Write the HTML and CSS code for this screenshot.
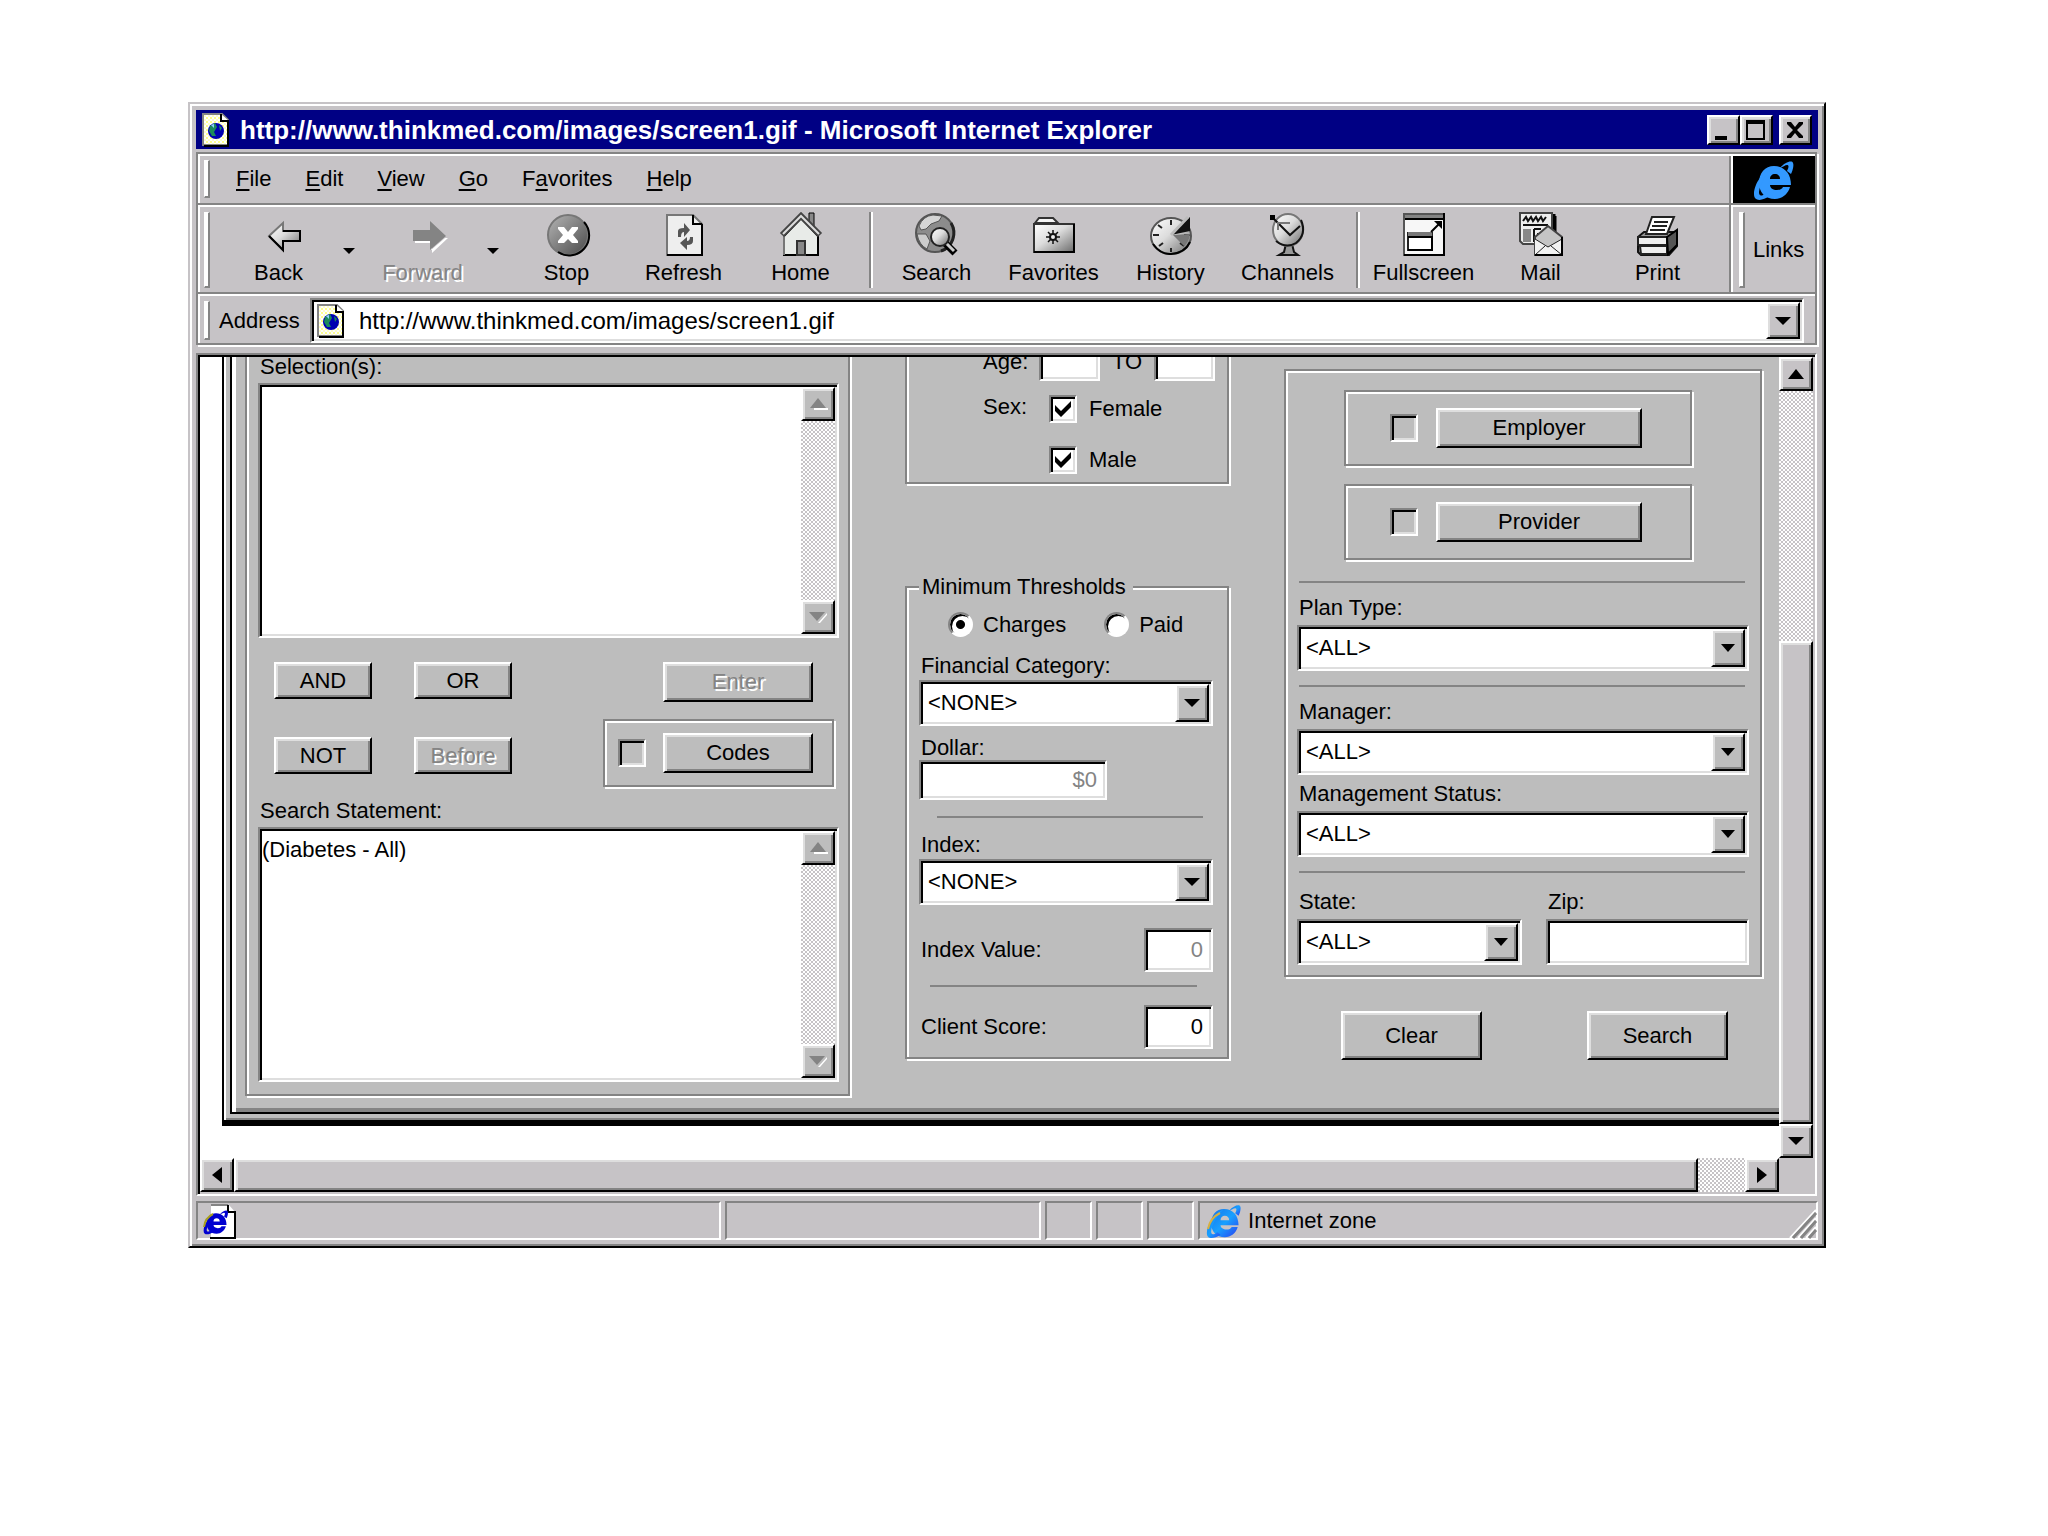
FILE: index.html
```html
<!DOCTYPE html>
<html lang="en">
<head>
<meta charset="utf-8">
<title>http://www.thinkmed.com/images/screen1.gif - Microsoft Internet Explorer</title>
<link rel="stylesheet" href="styles.css">
</head>
<body>
<svg class="defs" width="0" height="0" aria-hidden="true">
  <defs>
    <linearGradient id="steel" x1="0" y1="0" x2="1" y2="1"><stop offset="0" stop-color="#fff"/><stop offset=".45" stop-color="#dcdcdc"/><stop offset="1" stop-color="#6b6b6b"/></linearGradient>
    <linearGradient id="disc" x1="0" y1="0" x2="1" y2="1"><stop offset="0" stop-color="#b5b5b5"/><stop offset="1" stop-color="#4a4a4a"/></linearGradient>
    <linearGradient id="blue" x1="0" y1="0" x2="1" y2="1"><stop offset="0" stop-color="#1673e8"/><stop offset=".5" stop-color="#18a0ff"/><stop offset="1" stop-color="#2a3ff0"/></linearGradient>
    <pattern id="dots" width="4" height="4" patternUnits="userSpaceOnUse"><rect width="4" height="4" fill="#fff"/><rect width="2" height="2" fill="#ffff8c"/><rect x="2" y="2" width="2" height="2" fill="#ffffc8"/></pattern>
    <symbol id="page-globe" viewBox="0 0 28 34">
      <path d="M1 1H20L26 7V32H1Z" fill="url(#dots)" stroke="#848484" stroke-width="2"/>
      <path d="M26 7V33H2" fill="none" stroke="#000" stroke-width="2"/>
      <path d="M19 1V8H27" fill="#fff" stroke="#000" stroke-width="2"/>
      <circle cx="14" cy="18" r="8" fill="#0000b0"/>
      <path d="M8 13L13 10L15 14L12 19L14 23L10 23L7 18Z" fill="#1b8a5a"/>
      <path d="M17 12L20 15L18 18Z" fill="#1b8a5a"/>
      <path d="M9 12L12 11V15Z" fill="#8fd0ff"/>
    </symbol>
    <symbol id="e-logo" viewBox="0 0 40 42">
      <path fill-rule="evenodd" d="M20 7C30 7 37 14 37 26H16C16 29 19 31 23 31C26 31 28 30 29 28H36C34 35 28 40 21 40C11 40 5 33 5 24C5 14 11 7 20 7ZM16 20H26C26 17 24 15 21 15C18 15 16 17 16 20Z"/>
      <path d="M26 9C31 3 38 1 39 4C40 6 39 11 37 15L33 12C35 8 35 6 33 6C31 6 29 8 26 9Z"/>
      <path d="M19 8C9 12 0 25 0 35C0 43 8 42 16 37L12 34C7 38 5 37 5 33C6 25 11 16 19 8Z"/>
    </symbol>
  </defs>
</svg>

<main class="window">
  <header class="title-bar">
    <svg class="page-icon"><use href="#page-globe"/></svg>
    <h1>http://www.thinkmed.com/images/screen1.gif - Microsoft Internet Explorer</h1>
    <div class="title-buttons">
      <button class="bevel" aria-label="Minimize"><svg width="24" height="22" viewBox="0 0 24 22"><path d="M4 17H16V21H4Z"/></svg></button>
      <button class="bevel" aria-label="Maximize"><svg width="24" height="22" viewBox="0 0 24 22"><path fill-rule="evenodd" d="M2 1H21V21H2ZM4 5V19H19V5Z"/></svg></button>
      <button class="bevel close" aria-label="Close"><svg width="24" height="22" viewBox="0 0 24 22"><path d="M4 3H8L12 8L16 3H20V5L14 11L20 17V19H16L12 14L8 19H4V17L10 11L4 5Z"/></svg></button>
    </div>
  </header>

  <div class="rebar etched">
    <div class="band-row menu-row">
      <nav class="band menu">
        <span class="grip"></span>
        <button><u>F</u>ile</button><button><u>E</u>dit</button><button><u>V</u>iew</button><button><u>G</u>o</button><button>F<u>a</u>vorites</button><button><u>H</u>elp</button>
      </nav>
      <div class="brand"><svg width="40" height="44"><use href="#e-logo" fill="#3399ff"/></svg></div>
    </div>
    <div class="band-row tool-row">
      <div class="band tools">
        <span class="grip"></span>
        <button class="tool"><svg viewBox="0 0 44 44"><path d="M12 24L26 11V19H43V29H26V38Z" fill="url(#steel)" stroke="#777" stroke-width="2"/><path d="M26 19H43V29H26V38L12 24" fill="none" stroke="#000" stroke-width="2"/></svg>Back</button>
        <button class="drop-arrow" aria-label="Back history"><svg width="12" height="6"><path d="M0 0H12L6 6Z"/></svg></button>
        <button class="tool" disabled><svg viewBox="0 0 44 44"><path d="M14 29H30V38L44 26H47L31 41V31H14Z" fill="#fff"/><path d="M12 18H29V9L45 24L29 38V29H12Z" fill="#848484"/></svg>Forward</button>
        <button class="drop-arrow" aria-label="Forward history"><svg width="12" height="6"><path d="M0 0H12L6 6Z"/></svg></button>
        <button class="tool"><svg viewBox="0 0 44 44"><circle cx="23" cy="23" r="20" fill="url(#disc)" stroke="#777" stroke-width="2"/><path d="M39 10A20 20 0 0 1 13 40" fill="none" stroke="#000" stroke-width="2"/><path d="M13 15H19L23 20L27 15H33V17L28 23L33 29V31H27L23 27L19 31H13V29L18 23L13 17Z" fill="#fff"/></svg>Stop</button>
        <button class="tool"><svg viewBox="0 0 44 44"><path d="M5 3H31L40 12V43H5Z" fill="#eee" stroke="#777" stroke-width="2"/><path d="M40 12V43H5M31 3V12H40" fill="none" stroke="#000" stroke-width="2"/><path d="M16 25V19Q16 16 22 16V11L28 18L22 25V20Q19 20 19 25Z M31 25V29Q31 33 25 33V38L18 31L25 25V29Q28 29 28 25Z" fill="#555"/></svg>Refresh</button>
        <button class="tool"><svg viewBox="0 0 44 44"><path d="M30 1H35V16L30 11Z" fill="#888" stroke="#000"/><path d="M5 24L22 6L39 24V43H5Z" fill="#e8ebe8" stroke="#000" stroke-width="2"/><path d="M5 43V24" stroke="#777" stroke-width="2"/><path d="M3 23L22 4L41 23" fill="none" stroke="#444" stroke-width="6"/><path d="M4 22L22 4L40 22" fill="none" stroke="#ddd" stroke-width="2"/><path d="M18 43V29H26V43Z" fill="#888" stroke="#333" stroke-width="2"/></svg>Home</button>
        <span class="sep"></span>
        <button class="tool"><svg viewBox="0 0 44 44"><circle cx="20" cy="21" r="19" fill="#8c8c8c" stroke="#555" stroke-width="2"/><path d="M4 14Q8 4 18 3L27 4L24 9L16 12L11 17L6 18Z" fill="#d5d5d5" stroke="#555"/><path d="M2 22L11 22L15 29L12 37Q4 33 2 22Z" fill="#ccc" stroke="#555"/><path d="M36 11A19 19 0 0 1 26 39" fill="none" stroke="#222" stroke-width="3"/><path d="M30 31L40 41" stroke="#000" stroke-width="7"/><path d="M31 31L39 39" stroke="#ccc" stroke-width="3"/><circle cx="25" cy="25" r="9" fill="url(#steel)" stroke="#222" stroke-width="2"/></svg>Search</button>
        <button class="tool"><svg viewBox="0 0 44 44"><path d="M3 11L7 6H21L26 11Z" fill="#f4f4f4" stroke="#333" stroke-width="2"/><path d="M2 12H42V40H2Z" fill="url(#steel)" stroke="#333" stroke-width="2"/><path d="M42 12V40H2" fill="none" stroke="#000" stroke-width="2"/><path d="M21 18V32M14 25H28M16 20L26 30M26 20L16 30" stroke="#111" stroke-width="1.500"/><circle cx="21" cy="25" r="3" fill="#eee" stroke="#111" stroke-width="2"/></svg>Favorites</button>
        <button class="tool"><svg viewBox="0 0 44 44"><ellipse cx="22" cy="24" rx="20" ry="18" fill="url(#steel)" stroke="#555" stroke-width="2"/><path d="M4 32Q12 43 22 42Q36 41 41 30" fill="none" stroke="#000" stroke-width="2"/><path d="M22 8V13M22 36V40M4 23H10M35 23H41M9 13L13 16M10 34L14 31M31 31L35 34" stroke="#222" stroke-width="2"/><path d="M24 23L41 22Q40 30 35 34Z" fill="#777"/><path d="M22 23L41 5V19Z" fill="#111"/><path d="M22 23L39 5" stroke="#bbb" stroke-width="3"/></svg>History</button>
        <button class="tool"><svg viewBox="0 0 44 44"><path d="M18 40L20 32H26L28 40L32 43H13Z" fill="#999" stroke="#111" stroke-width="2"/><ellipse cx="22" cy="18" rx="15" ry="16" fill="url(#steel)" stroke="#777" stroke-width="2"/><path d="M35 8Q41 22 30 31Q20 37 10 29" fill="none" stroke="#111" stroke-width="2"/><path d="M6 5L24 23L34 14" fill="none" stroke="#111" stroke-width="2"/><path d="M12 18V11H24" fill="none" stroke="#777" stroke-width="2"/><path d="M4 3H9V8H4Z"/></svg>Channels</button>
        <span class="sep"></span>
        <button class="tool"><svg viewBox="0 0 44 44"><path d="M2 2H42V43H2Z" fill="#f7f7f7" stroke="#555" stroke-width="2"/><path d="M3 3H41V6H3Z" fill="#848484"/><path d="M42 1V43H2M3 7H41" fill="none" stroke="#000" stroke-width="2"/><path d="M6 21H30V38H6Z" fill="#fff" stroke="#222" stroke-width="2"/><path d="M6 20H30V25H6Z" fill="#777"/><path d="M6 25H30V38H6M29 20L38 11" fill="none" stroke="#000" stroke-width="2"/><path d="M32 9H40V17Z"/></svg>Fullscreen</button>
        <button class="tool"><svg viewBox="0 0 44 44"><path d="M35 2V26M36 4V26" stroke="#000" stroke-width="3"/><path d="M1 1H33V32H4L1 29Z" fill="#eee" stroke="#444" stroke-width="2"/><path d="M4 9L7 5L9 9L12 5L14 9L17 5L19 9L22 5L24 9L27 5M4 13H29" fill="none" stroke="#111" stroke-width="2"/><path d="M4 17H12V30H4Z" fill="#888"/><path d="M15 17H22M15 17V30M18 22H23" stroke="#111" stroke-width="2"/><path d="M16 25L29 14L43 25V43H16Z" fill="#c5c5c5" stroke="#444" stroke-width="2"/><path d="M16 27L29 35L43 27V43H16Z" fill="#f2f2f2"/><path d="M16 27L29 35L43 27M16 43L26 34M43 43L32 34" fill="none" stroke="#222"/><path d="M43 25V43H16" fill="none" stroke="#000" stroke-width="2"/></svg>Mail</button>
        <button class="tool"><svg viewBox="0 0 44 44"><path d="M2 25L8 20H41V34L33 43H5L2 40Z" fill="#999" stroke="#111" stroke-width="2"/><path d="M2 25H31V33H2ZM4 34H31V42H5Z" fill="#eee" stroke="#222" stroke-width="2"/><path d="M31 25L41 18V33L32 42Z" fill="#555" stroke="#000" stroke-width="2"/><path d="M10 22L16 5H38L31 22Z" fill="#fff" stroke="#222" stroke-width="2"/><path d="M18 10H32M16 14H31M14 18H29" stroke="#222" stroke-width="2"/></svg>Print</button>
      </div>
      <div class="band links"><span class="grip"></span><button>Links</button></div>
    </div>
    <div class="address-row">
      <span class="grip"></span>
      <label for="address">Address</label>
      <div class="combo sunken address-box">
        <svg class="page-icon"><use href="#page-globe"/></svg>
        <input id="address" type="text" value="http://www.thinkmed.com/images/screen1.gif">
        <button class="bevel arrow-btn" aria-label="Show addresses"><svg width="16" height="8"><path d="M0 0H16L8 8Z"/></svg></button>
      </div>
    </div>
  </div>

  <div class="pane">
    <div class="viewport">
      <div class="frame">
        <form class="form" onsubmit="return false">
          <section class="group etched codes-group">
            <label for="selections">Selection(s):</label>
            <div class="list sunken">
              <textarea id="selections"></textarea>
              <div class="vbar">
                <span class="bevel arrow-btn"><svg width="16" height="12"><path d="M4 10H18V12H4Z" fill="#fff"/><path d="M8 0L16 10H0Z" fill="#848484"/></svg></span>
                <span class="bevel arrow-btn"><svg width="18" height="12"><path d="M18 2V4L11 12H9Z" fill="#fff"/><path d="M0 1H16L8 10Z" fill="#848484"/></svg></span>
              </div>
            </div>
            <div class="operators">
              <div class="op-grid">
                <button class="bevel">AND</button><button class="bevel">OR</button>
                <button class="bevel">NOT</button><button class="bevel" disabled>Before</button>
              </div>
              <div class="op-side">
                <button class="bevel push" disabled>Enter</button>
                <div class="etched code-box">
                  <input type="checkbox" class="flat" aria-label="Use codes">
                  <button class="bevel push">Codes</button>
                </div>
              </div>
            </div>
            <label for="statement">Search Statement:</label>
            <div class="list sunken">
              <textarea id="statement">(Diabetes - All)</textarea>
              <div class="vbar">
                <span class="bevel arrow-btn"><svg width="16" height="12"><path d="M4 10H18V12H4Z" fill="#fff"/><path d="M8 0L16 10H0Z" fill="#848484"/></svg></span>
                <span class="bevel arrow-btn"><svg width="18" height="12"><path d="M18 2V4L11 12H9Z" fill="#fff"/><path d="M0 1H16L8 10Z" fill="#848484"/></svg></span>
              </div>
            </div>
          </section>

          <div class="middle">
            <section class="group etched person">
              <div class="age-row">
                <label for="age-from">Age:</label><input id="age-from" class="sunken" type="text">
                <label for="age-to">TO</label><input id="age-to" class="sunken" type="text">
              </div>
              <div class="sex-row">
                <span>Sex:</span>
                <div class="checks">
                  <label><input type="checkbox" checked>Female</label>
                  <label><input type="checkbox" checked>Male</label>
                </div>
              </div>
            </section>
            <fieldset class="group etched thresholds">
              <legend>Minimum Thresholds</legend>
              <div class="radios">
                <label><input type="radio" name="basis" checked>Charges</label>
                <label><input type="radio" name="basis">Paid</label>
              </div>
              <label for="fin">Financial Category:</label>
              <div class="combo sunken"><select id="fin"><option>&lt;NONE&gt;</option></select><span class="bevel arrow-btn"><svg width="16" height="8"><path d="M0 0H16L8 8Z"/></svg></span></div>
              <label for="dollar" class="dollar-label">Dollar:</label>
              <input id="dollar" class="sunken number" type="text" value="$0" disabled>
              <hr>
              <label for="index">Index:</label>
              <div class="combo sunken"><select id="index"><option>&lt;NONE&gt;</option></select><span class="bevel arrow-btn"><svg width="16" height="8"><path d="M0 0H16L8 8Z"/></svg></span></div>
              <div class="value-row first"><label for="index-value">Index Value:</label><input id="index-value" class="sunken number" type="text" value="0" disabled></div>
              <hr>
              <div class="value-row"><label for="score">Client Score:</label><input id="score" class="sunken number" type="text" value="0"></div>
            </fieldset>
          </div>

          <div class="right">
            <section class="group etched plan">
              <div class="etched pick"><input type="checkbox" class="flat" aria-label="Use employer"><button class="bevel push">Employer</button></div>
              <div class="etched pick"><input type="checkbox" class="flat" aria-label="Use provider"><button class="bevel push">Provider</button></div>
              <hr>
              <label for="plan">Plan Type:</label>
              <div class="combo sunken"><select id="plan"><option>&lt;ALL&gt;</option></select><span class="bevel arrow-btn"><svg width="14" height="8"><path d="M0 0H14L7 8Z"/></svg></span></div>
              <hr>
              <label for="manager">Manager:</label>
              <div class="combo sunken"><select id="manager"><option>&lt;ALL&gt;</option></select><span class="bevel arrow-btn"><svg width="14" height="8"><path d="M0 0H14L7 8Z"/></svg></span></div>
              <label for="status" class="status-label">Management Status:</label>
              <div class="combo sunken"><select id="status"><option>&lt;ALL&gt;</option></select><span class="bevel arrow-btn"><svg width="14" height="8"><path d="M0 0H14L7 8Z"/></svg></span></div>
              <hr>
              <div class="place">
                <div>
                  <label for="state">State:</label>
                  <div class="combo sunken"><select id="state"><option>&lt;ALL&gt;</option></select><span class="bevel arrow-btn"><svg width="14" height="8"><path d="M0 0H14L7 8Z"/></svg></span></div>
                </div>
                <div>
                  <label for="zip">Zip:</label>
                  <input id="zip" class="sunken" type="text">
                </div>
              </div>
            </section>
            <div class="actions">
              <button class="bevel push" type="reset">Clear</button>
              <button class="bevel push">Search</button>
            </div>
          </div>
        </form>
      </div>
    </div>
    <div class="scroll-v">
      <span class="bevel arrow-btn"><svg width="16" height="10"><path d="M8 0L16 10H0Z"/></svg></span>
      <span class="track"></span>
      <span class="bevel thumb"></span>
      <span class="bevel arrow-btn"><svg width="16" height="8"><path d="M0 0H16L8 8Z"/></svg></span>
    </div>
    <div class="scroll-h">
      <span class="bevel arrow-btn"><svg width="10" height="16"><path d="M10 0V16L0 8Z"/></svg></span>
      <span class="bevel thumb"></span>
      <span class="track"></span>
      <span class="bevel arrow-btn"><svg width="10" height="16"><path d="M0 0V16L10 8Z"/></svg></span>
    </div>
  </div>

  <footer class="status-bar">
    <div class="cell main"><svg width="34" height="36" viewBox="0 0 34 36"><path d="M10 2H28L34 9V34H10Z" fill="#fff"/><path d="M10 2H27" stroke="#848484" stroke-width="2"/><path d="M27 2V9H34V35H9" fill="none" stroke="#000" stroke-width="2"/><use href="#e-logo" x="2" y="6" width="26" height="26" fill="#0000d0"/><path d="M3 24Q4 15 12 11" fill="none" stroke="#a8a020" stroke-width="2"/></svg></div>
    <div class="cell second"></div>
    <div class="cell small"></div>
    <div class="cell small"></div>
    <div class="cell small"></div>
    <div class="cell zone">
      <svg width="36" height="36"><use href="#e-logo" fill="url(#blue)"/><path d="M2 26Q4 15 14 10" fill="none" stroke="#d8b040" stroke-width="2"/></svg>
      <span>Internet zone</span>
      <svg class="size-grip" width="26" height="28" viewBox="0 0 26 28"><path d="M0 28L26 0M8 28L26 8M16 28L26 17" stroke="#fff" stroke-width="2"/><path d="M3 28L26 3M11 28L26 11M19 28L26 20" stroke="#848484" stroke-width="3"/></svg>
    </div>
  </footer>
</main>
</body>
</html>
```
FILE: styles.css
```css
:root {
  --chrome: #c6c3c6;
  --face: #bdbdbd;
  --dark: #848484;
  --lite: #dedede;
}

* { box-sizing: border-box; }

body {
  margin: 0;
  background: #fff;
  color: #000;
  font: 22px/24px "Liberation Sans", Arial, sans-serif;
}

button, input, select, textarea {
  margin: 0;
  padding: 0;
  border: 0;
  border-radius: 0;
  background: none;
  color: inherit;
  font: inherit;
  appearance: none;
  outline: none;
}

svg { display: block; flex: none; overflow: visible; }
.defs { position: absolute; }
u { text-underline-offset: 3px; text-decoration-thickness: 2px; }

/* Shared 3-D edges */
.etched {
  border: 2px solid var(--dark);
  box-shadow: 2px 2px 0 #fff, inset 2px 2px 0 #fff;
}

.bevel {
  border: 2px solid #000;
  border-top-color: #fff;
  border-left-color: #fff;
  background: var(--face);
  box-shadow: inset 2px 2px 0 var(--lite), inset -2px -2px 0 var(--dark);
}

.sunken {
  border: 2px solid #fff;
  border-top-color: var(--dark);
  border-left-color: var(--dark);
  background: #fff;
  box-shadow: inset 2px 2px 0 #000, inset -2px -2px 0 var(--lite);
}

.arrow-btn {
  display: flex;
  align-items: center;
  justify-content: center;
  flex: none;
}

.bevel:disabled, .tool:disabled {
  color: var(--dark);
  text-shadow: 2px 2px 0 #fff;
}

.window {
  margin: 102px 222px 0 188px;
  padding: 6px;
  border: 2px solid #000;
  border-top-color: var(--chrome);
  border-left-color: var(--chrome);
  background: var(--chrome);
  box-shadow: inset 2px 2px 0 #fff, inset -2px -2px 0 var(--dark);
}

.rebar .bevel, .title-bar .bevel, .scroll-v .bevel, .scroll-h .bevel { background: var(--chrome); }

/* Title bar */
.title-bar {
  display: flex;
  align-items: center;
  gap: 10px;
  height: 39px;
  padding: 0 6px;
  background: #000084;
  color: #fff;
}

.page-icon { width: 28px; height: 34px; }

.title-bar h1 {
  flex: 1;
  margin: 0;
  font-size: 26px;
  line-height: 28px;
  font-weight: bold;
  white-space: nowrap;
}

.title-buttons { display: flex; }
.title-buttons button { width: 33px; height: 30px; padding: 2px; }
.title-buttons .close { margin-left: 6px; }

/* Tool bands */
.rebar { margin: 3px 1px 0 0; }
.band-row { display: flex; border-bottom: 2px solid var(--dark); box-shadow: 0 2px 0 #fff; }
.menu-row { height: 51px; }
.tool-row { height: 89px; }
.band { display: flex; padding-left: 6px; }

.grip {
  flex: none;
  width: 6px;
  border: 1px solid #fff;
  border-right: 2px solid var(--dark);
  border-bottom: 2px solid var(--dark);
  background: #fff;
}

.menu { flex: 1; align-items: center; gap: 34px; }
.menu .grip { height: 38px; margin-right: -8px; }

.brand {
  display: flex;
  align-items: center;
  justify-content: center;
  width: 82px;
  margin-top: 2px;
  background: #000;
  box-shadow: -2px 0 0 #fff, -4px 0 0 var(--dark);
}

.tools { flex: 1; padding-top: 7px; }
.tools .grip { height: 76px; margin-right: 10px; }
.tool {
  display: flex;
  flex-direction: column;
  align-items: center;
  gap: 5px;
  width: 117px;
  height: 73px;
}
.tool svg { width: 44px; height: 44px; }
.drop-arrow { display: flex; justify-content: center; width: 27px; padding: 36px 4px 0 0; }

.sep {
  width: 4px;
  height: 76px;
  margin: 0 5px 0 10px;
  border-left: 2px solid var(--dark);
  border-right: 2px solid #fff;
}

.links { width: 82px; padding-top: 7px; gap: 8px; box-shadow: -2px 0 0 #fff, -4px 0 0 var(--dark); }
.links .grip { height: 76px; }
.links button { height: 76px; }

.address-row { display: flex; align-items: center; height: 49px; padding: 4px 11px 0 6px; }
.address-row .grip { height: 39px; margin-right: 9px; }
.address-row label { width: 91px; }
.combo.address-box { flex: 1; height: 45px; padding-left: 5px; }
.address-box input { flex: 1; padding-left: 14px; font-size: 24px; }

/* Drop-down boxes */
.combo { display: flex; align-items: center; height: 46px; padding: 2px; }
.combo select { flex: 1; align-self: stretch; min-width: 0; padding-left: 5px; }
.combo .arrow-btn { width: 34px; height: 100%; }

/* Document pane */
.pane {
  display: grid;
  grid-template-columns: minmax(0, 1fr) 34px;
  grid-template-rows: auto 34px;
  margin: 8px 1px 0 0;
  padding: 2px;
  border: 2px solid #fff;
  border-top-color: var(--dark);
  border-left-color: var(--dark);
  box-shadow: inset 2px 2px 0 #000;
}

.viewport { overflow: hidden; padding: 0 0 32px 22px; background: #fff; }

.frame {
  margin-top: -12px;
  padding: 0 0 6px 6px;
  border-left: 2px solid #000;
  border-bottom: 6px solid #000;
  background: var(--face);
  box-shadow: inset 2px 0 0 #fff, inset 0 -2px 0 var(--dark);
}

.form {
  display: grid;
  grid-template-columns: 607fr 326fr 480fr;
  column-gap: 53px;
  align-items: start;
  padding: 0 15px 16px 13px;
  border-left: 2px solid #000;
  border-bottom: 2px solid #000;
  box-shadow: inset 4px 0 0 #fff, inset 0 -4px 0 var(--dark);
}

.group { margin: 0 2px 0 0; }
.group > label { display: block; padding-left: 2px; }

.codes-group { padding: 8px 9px 12px 11px; }

.list { display: flex; height: 255px; margin-top: 4px; padding: 2px; }
.list textarea { flex: 1; padding: 7px 0; resize: none; }
.vbar {
  display: flex;
  flex-direction: column;
  justify-content: space-between;
  width: 34px;
}
.vbar .arrow-btn { height: 34px; }

.track, .vbar { background: repeating-conic-gradient(#fff 0 25%, #c6c3c6 0 50%) 0 0 / 4px 4px; }

.operators { display: flex; justify-content: space-between; padding: 24px 5px 12px 16px; }
.op-grid { display: grid; grid-template-columns: 98px 98px; grid-auto-rows: 37px; gap: 38px 42px; }
.op-side { display: flex; flex-direction: column; align-items: flex-start; width: 231px; gap: 17px; }
.op-side .push { width: 150px; height: 40px; }
.op-side > .push { margin-left: 60px; }
.code-box { display: flex; align-items: center; gap: 17px; width: 100%; height: 68px; padding-left: 13px; }

/* Tick boxes and radios */
input[type="checkbox"] {
  flex: none;
  width: 28px;
  height: 28px;
  border: 2px solid #fff;
  border-top-color: var(--dark);
  border-left-color: var(--dark);
  background: #fff;
  box-shadow: inset 2px 2px 0 #000, inset -2px -2px 0 var(--lite);
}
input[type="checkbox"].flat { background: var(--face); }
input[type="checkbox"]:checked {
  background: #fff url("data:image/svg+xml,%3Csvg xmlns='http://www.w3.org/2000/svg' width='24' height='24'%3E%3Cpath d='M4 8L10 14L20 4V10L10 20L4 14Z'/%3E%3C/svg%3E") center no-repeat;
}
input[type="radio"] {
  width: 25px;
  height: 25px;
  border: 2px solid #fff;
  border-top-color: var(--dark);
  border-left-color: var(--dark);
  border-radius: 50%;
  background: #fff;
  box-shadow: inset 2px 2px 0 #000;
}
input[type="radio"]:checked { background: radial-gradient(circle, #000 4px, #fff 5px); }

/* Person filters */
.person { padding: 0 0 8px 76px; }
.age-row { display: flex; align-items: center; }
.age-row label { width: 56px; padding-bottom: 4px; }
.age-row input { width: 61px; height: 34px; }
.age-row input + label { width: 42px; margin-left: 12px; }
.sex-row { display: flex; margin-top: 14px; }
.sex-row > span { width: 66px; }
.checks { display: grid; gap: 23px; }
.checks label { display: flex; align-items: center; gap: 12px; }

/* Minimum thresholds */
.thresholds { position: relative; margin-top: 102px; padding: 24px 14px 8px 12px; }
.thresholds legend { position: absolute; top: -13px; left: 12px; padding: 0 7px 0 3px; background: var(--face); }
.radios { display: flex; gap: 38px; padding-left: 29px; margin-bottom: 17px; }
.radios label { display: flex; align-items: center; gap: 10px; }
.thresholds > .combo { margin-top: 2px; }
.thresholds .dollar-label { margin-top: 10px; }
.number { width: 69px; height: 44px; padding-right: 8px; text-align: right; }
.number:disabled { color: var(--dark); }
#dollar { display: block; width: 188px; height: 40px; }

hr { height: 2px; margin: 0; border: 0; background: var(--dark); }
.thresholds hr { margin: 16px 10px 15px 18px; }
.value-row { display: flex; align-items: center; justify-content: space-between; padding-left: 2px; }
.value-row.first { margin-top: 23px; }
.thresholds .value-row + hr { margin: 13px 16px 18px 11px; }

/* Plan filters */
.plan { margin-top: 24px; padding: 19px 11px 10px; }
.pick { display: flex; align-items: center; gap: 18px; width: 348px; height: 76px; margin: 0 0 18px 47px; padding-left: 44px; }
.pick .push { width: 206px; height: 40px; }
.plan hr { margin: 14px 4px 13px 2px; }
.pick + hr { margin-top: 21px; }
.plan .combo, .place input { margin-top: 5px; }
.plan .status-label { margin-top: 7px; }
.place { display: grid; grid-template-columns: 226fr 204fr; gap: 24px; padding-top: 4px; }
.place label { display: block; padding-left: 2px; }
.place input { width: 100%; height: 46px; }

.actions { display: flex; gap: 105px; margin: 34px 0 0 57px; }
.actions .push { width: 141px; height: 49px; }

/* Scroll bars */
.scroll-v { display: flex; flex-direction: column; }
.scroll-v .arrow-btn { height: 34px; }
.scroll-v .track { flex: 251 1 0; }
.scroll-v .thumb { flex: 482 1 0; }
.scroll-h { display: flex; }
.scroll-h .arrow-btn { width: 34px; }
.scroll-h .thumb { flex: 1464 1 0; }
.scroll-h .track { flex: 47 1 0; }

/* Status bar */
.status-bar { display: flex; gap: 4px; height: 39px; margin-top: 5px; }
.cell {
  display: flex;
  align-items: center;
  border: 2px solid #fff;
  border-top-color: var(--dark);
  border-left-color: var(--dark);
}
.main { flex: 525 1 0; padding-left: 3px; }
.second { flex: 316 1 0; }
.small { width: 47px; }
.zone { flex: 618 1 0; gap: 6px; padding-left: 6px; }
.size-grip { margin-left: auto; align-self: flex-end; background: var(--chrome); }
```
